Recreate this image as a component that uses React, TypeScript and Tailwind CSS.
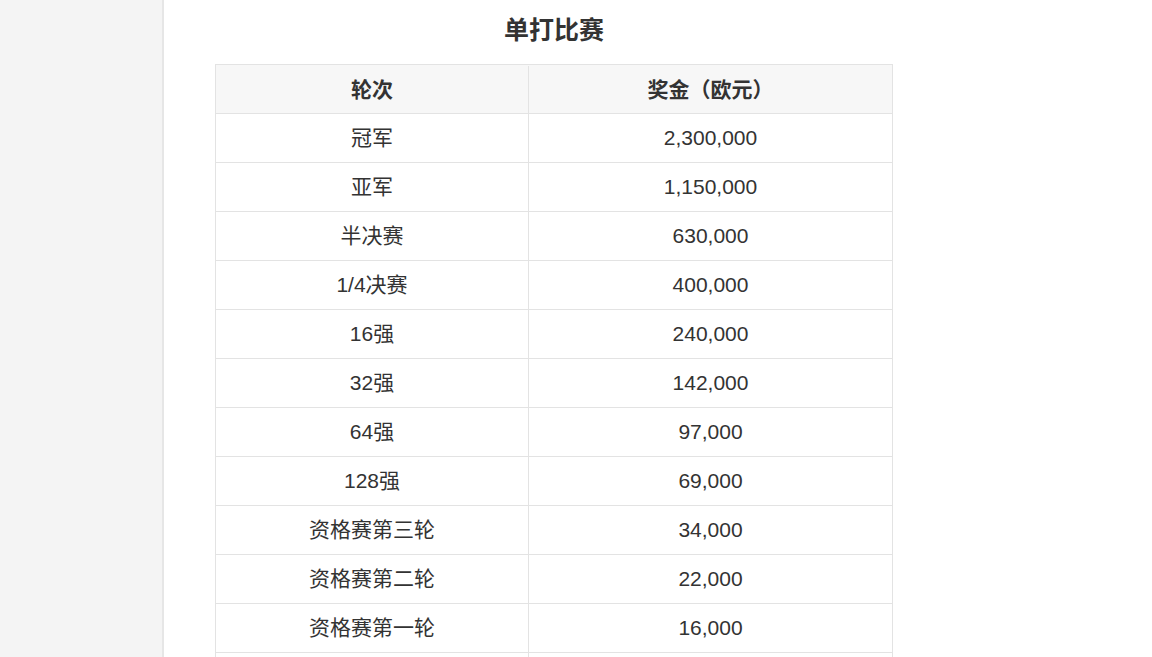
const rows: [string, string][] = [
  ["冠军", "2,300,000"],
  ["亚军", "1,150,000"],
  ["半决赛", "630,000"],
  ["1/4决赛", "400,000"],
  ["16强", "240,000"],
  ["32强", "142,000"],
  ["64强", "97,000"],
  ["128强", "69,000"],
  ["资格赛第三轮", "34,000"],
  ["资格赛第二轮", "22,000"],
  ["资格赛第一轮", "16,000"],
  ["", ""],
];

export default function App() {
  return (
    <div className="flex h-screen overflow-hidden bg-white font-['Liberation_Sans','Noto_Sans_CJK_SC',sans-serif] text-[#333]">
      {/* sidebar */}
      <div className="w-[164px] shrink-0 border-r-2 border-[#e6e6e6] bg-[#f4f4f4]" />

      <div className="pl-[51px]">
        <div className="w-[678px]">
          <h2 className="flex h-[64px] items-center justify-center pb-[3px] text-[25px] font-bold">
            单打比赛
          </h2>

          <div className="border-x border-t border-[#e3e3e3]">
            <div className="flex h-[49px] border-b border-[#e3e3e3] bg-[#f7f7f7] pt-[1px] text-[21px] font-bold">
              <div className="flex w-[313px] items-center justify-center border-r border-[#e3e3e3]">轮次</div>
              <div className="flex flex-1 items-center justify-center">奖金（欧元）</div>
            </div>
            {rows.map(([round, prize], i) => (
              <div key={i} className="flex h-[49px] border-b border-[#e3e3e3] text-[21px]">
                <div className="flex w-[313px] items-center justify-center border-r border-[#e3e3e3]">{round}</div>
                <div className="flex flex-1 items-center justify-center">{prize}</div>
              </div>
            ))}
          </div>
        </div>
      </div>
    </div>
  );
}
